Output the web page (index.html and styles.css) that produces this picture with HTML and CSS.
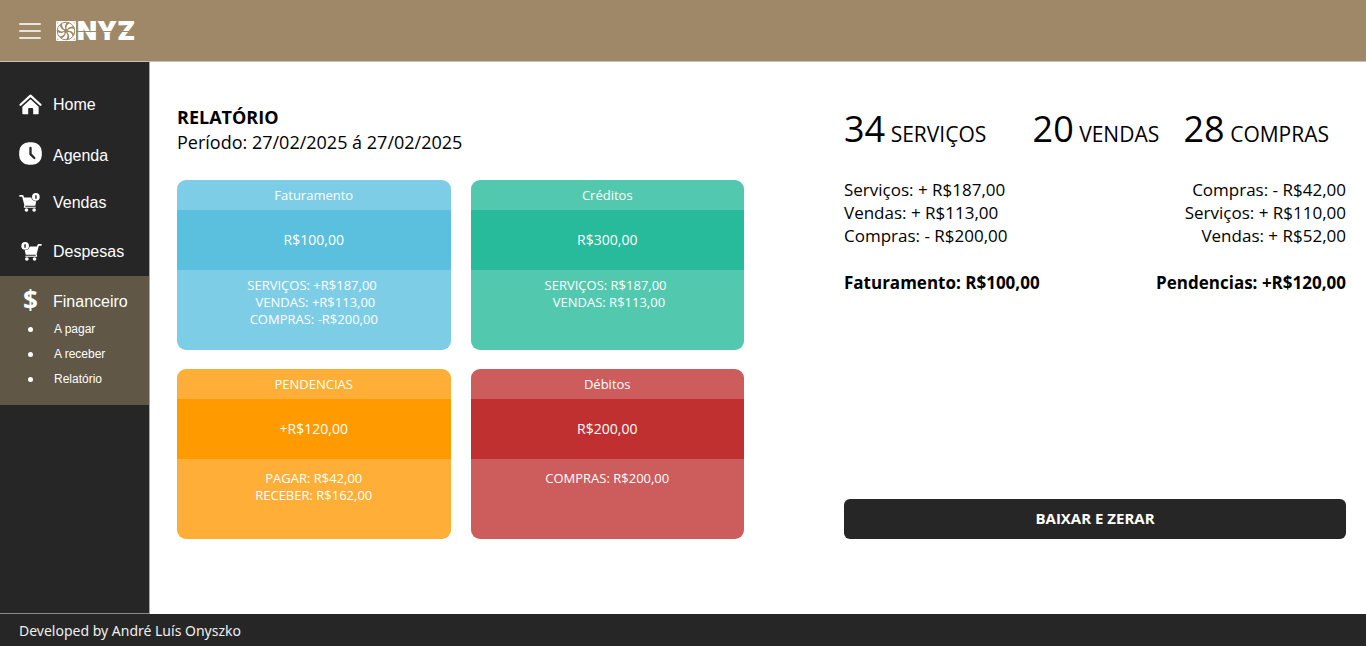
FILE: index.html
```html
<!DOCTYPE html>
<html lang="pt-BR">
<head>
<meta charset="utf-8">
<title>Onyz - Relatório</title>
<link rel="stylesheet" href="styles.css">
</head>
<body>
<header class="topbar">
  <button class="menu-button" type="button" aria-label="Menu"><span class="menu-line"></span><span class="menu-line"></span><span class="menu-line"></span></button>
  <a class="brand" href="#" aria-label="ONYZ">
    <svg class="brand-mark" viewBox="0 0 20 20" aria-hidden="true">
      <rect width="20" height="20" rx="1" fill="#fff"/>
      <circle cx="10" cy="10" r="8.8" fill="none" stroke="#9e8868" stroke-width="1"/>
      <g fill="#9e8868">
        <path id="gap" d="M9.4 8 C8.4 5.6 9.2 3.2 11.2 1.3 L13.8 2.1 C11.2 3.6 10.1 5.6 10.4 8 Z"/>
        <use href="#gap" transform="rotate(51.4 10 10)"/>
        <use href="#gap" transform="rotate(102.9 10 10)"/>
        <use href="#gap" transform="rotate(154.3 10 10)"/>
        <use href="#gap" transform="rotate(205.7 10 10)"/>
        <use href="#gap" transform="rotate(257.1 10 10)"/>
        <use href="#gap" transform="rotate(308.6 10 10)"/>
        <circle cx="10" cy="10" r="2.2"/>
        <circle cx="1.8" cy="1.8" r=".6"/><circle cx="18.2" cy="1.8" r=".6"/><circle cx="1.8" cy="18.2" r=".6"/><circle cx="18.2" cy="18.2" r=".6"/>
      </g>
    </svg>
    <span class="brand-text">NYZ</span>
  </a>
</header>
<div class="body">
  <nav class="sidebar">
    <a class="nav-item" href="#">
      <svg class="nav-icon" viewBox="0 0 24 24" aria-hidden="true"><path d="M1.6 12.3 12 2.8 22.4 12.3" fill="none" stroke="#fff" stroke-width="2.3" stroke-linecap="round" stroke-linejoin="round"/><path d="M12 6.6 20.5 14.3V21.5Q20.5 22.2 19.8 22.2H14.8V16.8Q14.8 15.6 13.6 15.6H10.6Q9.6 15.6 9.6 16.8V22.2H4.2Q3.5 22.2 3.5 21.5V14.3Z" fill="#fff"/></svg>
      Home</a>
    <a class="nav-item nav-item-low" href="#">
      <svg class="nav-icon nav-icon-raised" viewBox="0 0 24 24" aria-hidden="true"><rect x="0.2" y="0.2" width="23.6" height="23.6" rx="10" fill="#fff"/><path d="M12 6.2V12.7L16 16.7" fill="none" stroke="#262626" stroke-width="2.4" stroke-linecap="round" stroke-linejoin="round"/></svg>
      Agenda</a>
    <a class="nav-item" href="#">
      <svg class="nav-icon" viewBox="0 0 24 24" aria-hidden="true"><g fill="#fff"><path d="M.4 4.2H4.2L5.4 6.8H12.8Q13.8 10.8 18 10.8L17 15.4H6.8L6.4 16.4H17.4V17.6H5.4Q4.6 17.2 5.2 15.8L5.6 14.8 3.3 5.9H.4Z"/><circle cx="7.8" cy="19.8" r="1.9"/><circle cx="15.8" cy="19.8" r="1.9"/><circle cx="17.6" cy="6.2" r="4"/></g><path d="M17.7 4.4V8" stroke="#262626" stroke-width="1.5"/></svg>
      Vendas</a>
    <a class="nav-item" href="#">
      <svg class="nav-icon" viewBox="0 0 24 24" aria-hidden="true"><g transform="translate(24 0) scale(-1 1)"><g fill="#fff"><path d="M.4 4.2H4.2L5.4 6.8H12.8Q13.8 10.8 18 10.8L17 15.4H6.8L6.4 16.4H17.4V17.6H5.4Q4.6 17.2 5.2 15.8L5.6 14.8 3.3 5.9H.4Z"/><circle cx="7.8" cy="19.8" r="1.9"/><circle cx="15.8" cy="19.8" r="1.9"/><circle cx="17.6" cy="6.2" r="4"/></g><path d="M17.7 4.4V8" stroke="#262626" stroke-width="1.5"/></g></svg>
      Despesas</a>
    <section class="nav-group">
      <a class="nav-item nav-item-active" href="#"><span class="nav-dollar" aria-hidden="true">$</span>Financeiro</a>
      <ul class="subnav">
        <li><a class="subnav-link" href="#">A pagar</a></li>
        <li><a class="subnav-link" href="#">A receber</a></li>
        <li><a class="subnav-link" href="#">Relatório</a></li>
      </ul>
    </section>
  </nav>
  <main class="content">
    <section class="report">
      <div class="report-head">
        <h1 class="report-title">RELATÓRIO</h1>
        <p class="report-period">Período: 27/02/2025 á 27/02/2025</p>
      </div>
      <div class="cards">
        <article class="card card-blue">
          <h2 class="card-title">Faturamento</h2>
          <p class="card-value">R$100,00</p>
          <p class="card-details">SERVIÇOS: +R$187,00&nbsp;<br>&nbsp;VENDAS: +R$113,00<br>COMPRAS: -R$200,00</p>
        </article>
        <article class="card card-green">
          <h2 class="card-title">Créditos</h2>
          <p class="card-value">R$300,00</p>
          <p class="card-details">SERVIÇOS: R$187,00&nbsp;<br>&nbsp;VENDAS: R$113,00</p>
        </article>
        <article class="card card-orange">
          <h2 class="card-title">PENDENCIAS</h2>
          <p class="card-value">+R$120,00</p>
          <p class="card-details card-details-low">PAGAR: R$42,00<br>RECEBER: R$162,00</p>
        </article>
        <article class="card card-red">
          <h2 class="card-title">Débitos</h2>
          <p class="card-value">R$200,00</p>
          <p class="card-details card-details-low">COMPRAS: R$200,00</p>
        </article>
      </div>
    </section>
    <section class="summary">
      <div class="counts">
        <p class="count"><span class="count-number">34</span> SERVIÇOS</p>
        <p class="count count-middle"><span class="count-number">20</span> VENDAS</p>
        <p class="count"><span class="count-number">28</span> COMPRAS</p>
      </div>
      <div class="totals">
        <div class="total">
          <p class="total-lines">Serviços: + R$187,00<br>Vendas: + R$113,00<br>Compras: - R$200,00</p>
          <p class="total-sum">Faturamento: R$100,00</p>
        </div>
        <div class="total total-right">
          <p class="total-lines">Compras: - R$42,00<br>Serviços: + R$110,00<br>Vendas: + R$52,00</p>
          <p class="total-sum">Pendencias: +R$120,00</p>
        </div>
      </div>
      <button class="reset-button" type="button">BAIXAR E ZERAR</button>
    </section>
  </main>
</div>
<footer class="footer">Developed by André Luís Onyszko</footer>
</body>
</html>
```
FILE: styles.css
```css
* { box-sizing: border-box; }
body {
  margin: 0;
  min-height: 100vh;
  display: flex;
  flex-direction: column;
  background: #fff;
  color: #000;
  font-family: "Open Sans", sans-serif;
}
h1, h2, p, ul { margin: 0; padding: 0; }
a { color: inherit; text-decoration: none; }
button { border: 0; font: inherit; }

.topbar {
  display: flex;
  align-items: center;
  gap: 15px;
  padding: 21px 19px 20px;
  background: #9e8868;
  border-bottom: 1px solid #c4c0b8;
}
.menu-button {
  display: flex;
  flex-direction: column;
  gap: 5px;
  padding: 0;
  background: none;
}
.menu-line { width: 22px; height: 2px; border-radius: 1px; background: #e9e4dc; }
.brand { display: flex; align-items: center; gap: 1px; color: #fff; }
.brand-mark { width: 20px; height: 20px; }
.brand-text {
  position: relative;
  font: 900 26px/20px Inter, sans-serif;
}
.brand-text::after {
  content: "";
  position: absolute;
  left: 0;
  right: 0;
  top: 10px;
  height: 1px;
  background: #9e8868;
}

.body { flex: 1; display: flex; }
.sidebar {
  flex: none;
  width: 150px;
  padding-top: 18px;
  background: #262626;
  border-right: 1px solid #a8a8a8;
  border-bottom: 1px solid #8c8c8c;
  color: #fff;
  font-family: "Liberation Sans", Arial, sans-serif;
}
.nav-item {
  display: flex;
  align-items: center;
  gap: 11px;
  height: 49px;
  padding-left: 19px;
  font-size: 16px;
}
.nav-item-low { padding-top: 4px; }
.nav-icon { flex: none; width: 23px; height: 23px; }
.nav-icon-raised { margin-bottom: 4px; }
.nav-group { background: #605746; padding-bottom: 13px; }
.nav-dollar {
  width: 23px;
  margin-bottom: 4px;
  text-align: center;
  font: 700 26px/26px "Open Sans", sans-serif;
}
.nav-item-active { height: 41px; padding-top: 10px; }
.subnav { list-style: none; }
.subnav-link {
  display: flex;
  align-items: center;
  gap: 21px;
  padding-left: 28px;
  font-size: 12px;
  line-height: 25px;
}
.subnav-link::before {
  content: "";
  width: 5px;
  height: 5px;
  border-radius: 50%;
  background: #fff;
}

.content {
  flex: 1;
  display: grid;
  grid-template-columns: 567fr 502fr;
  column-gap: 100px;
  padding: 43px 20px 75px 27px;
}
.report-head { height: 75px; font-size: 18px; line-height: 25px; }
.report-title { font-size: 18px; font-weight: 700; }
.cards { display: grid; grid-template-columns: 1fr 1fr; gap: 19px 20px; }
.card {
  display: flex;
  flex-direction: column;
  min-height: 170px;
  overflow: hidden;
  border-radius: 9px;
  color: #fff;
  text-align: center;
}
.card-title { font-size: 13px; font-weight: 400; line-height: 30px; }
.card-value { font-size: 14px; line-height: 60px; }
.card-details { padding-top: 7px; font-size: 13px; line-height: 17px; }
.card-details-low { padding-top: 11px; }
.card-blue { background: #7ecde6; }
.card-blue .card-value { background: #5bc0de; }
.card-green { background: #52c9af; }
.card-green .card-value { background: #27ba9b; }
.card-orange { background: #ffaf37; }
.card-orange .card-value { background: #ff9b00; }
.card-red { background: #cd5c5c; }
.card-red .card-value { background: #c03030; }

.summary { display: flex; flex-direction: column; }
.counts {
  display: flex;
  justify-content: space-between;
  padding-right: 17px;
  font-size: 21px;
  line-height: 48px;
}
.count-middle { padding-left: 22px; }
.count-number { font-size: 36px; }
.totals {
  display: flex;
  justify-content: space-between;
  padding-top: 20px;
  font-size: 17px;
  line-height: 23px;
}
.total-right { text-align: right; }
.total-sum { padding-top: 24px; font-weight: 700; }
.reset-button {
  margin-top: auto;
  height: 40px;
  padding-bottom: 3px;
  border-radius: 6px;
  background: #262626;
  color: #fff;
  font-size: 15px;
  font-weight: 700;
}
.footer {
  padding: 7px 19px 5px;
  background: #262626;
  color: #eee;
  font-family: "Noto Sans", sans-serif;
  font-size: 14px;
  line-height: 20px;
}
```
